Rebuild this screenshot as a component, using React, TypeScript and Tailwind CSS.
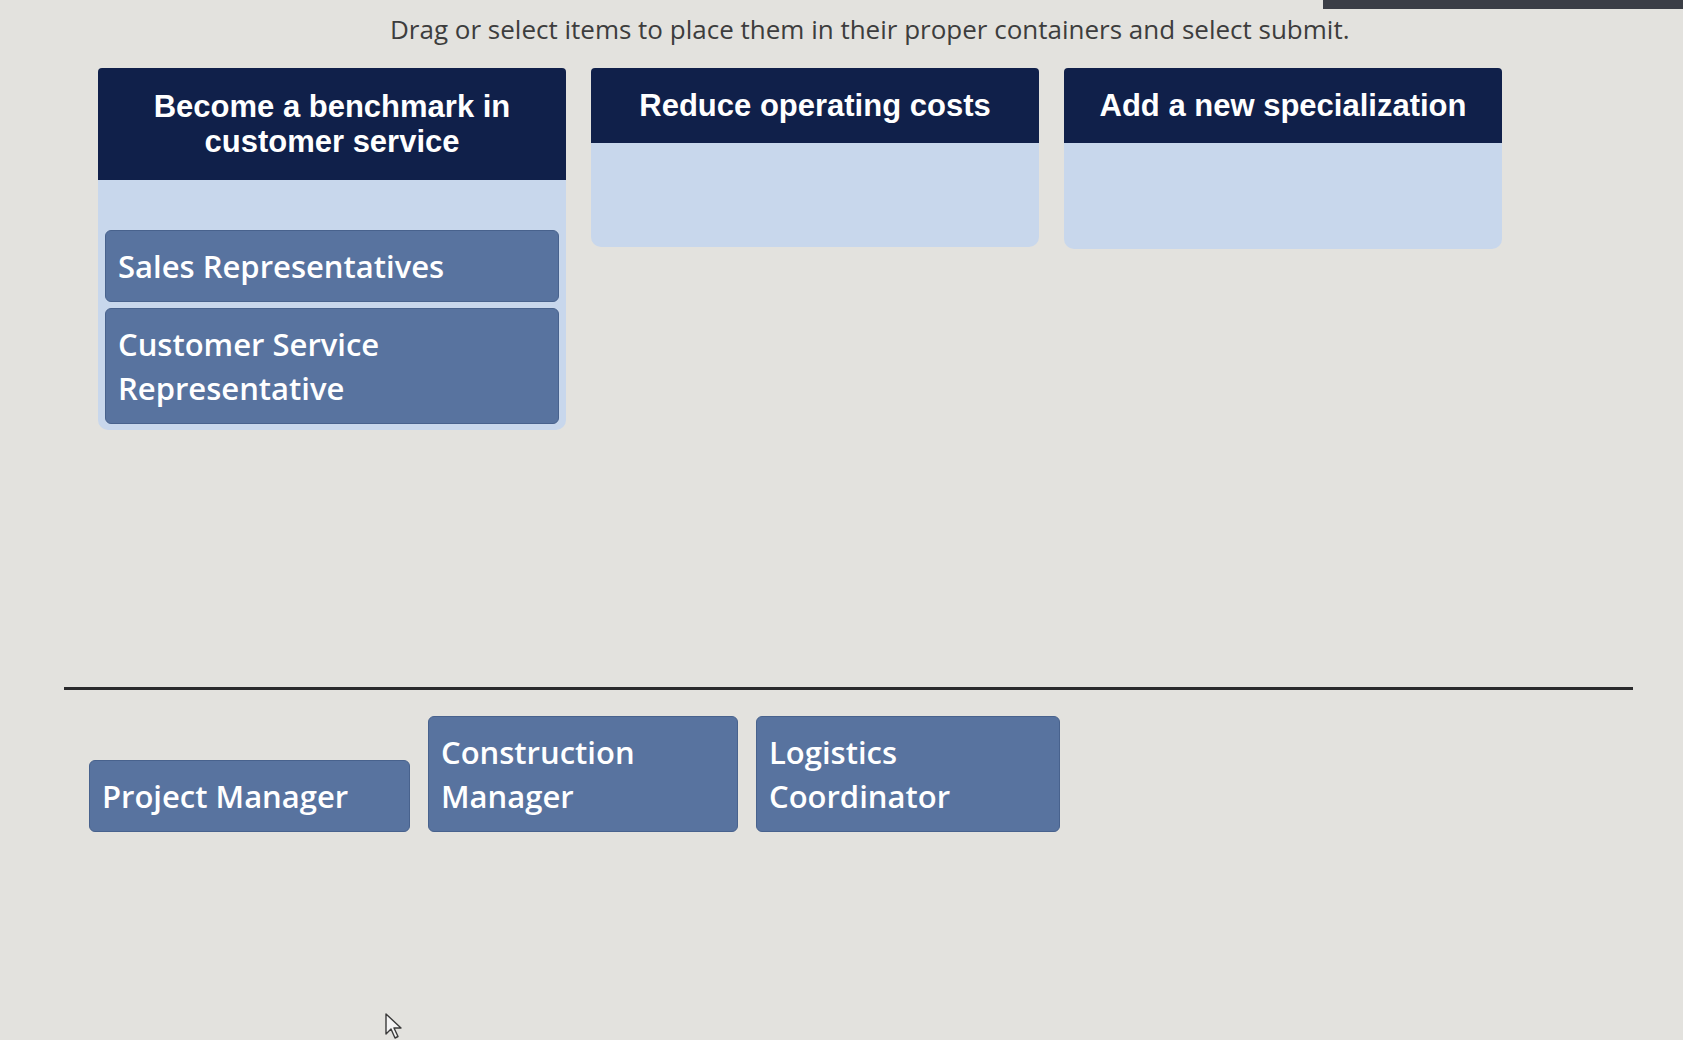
import React from "react";

type Goal = {
  title: string[];
  width: string;
  bodyClass: string;
  items: string[][];
};

const goals: Goal[] = [
  {
    title: ["Become a benchmark in", "customer service"],
    width: "w-[468px]",
    bodyClass: "pt-[50px] pb-[6px] px-[7px] flex flex-col gap-[6px]",
    items: [["Sales Representatives"], ["Customer Service", "Representative"]],
  },
  {
    title: ["Reduce operating costs"],
    width: "w-[448px]",
    bodyClass: "h-[104px]",
    items: [],
  },
  {
    title: ["Add a new specialization"],
    width: "w-[438px]",
    bodyClass: "h-[106px]",
    items: [],
  },
];

const bank = [
  { lines: ["Project Manager"], width: "w-[321px]" },
  { lines: ["Construction", "Manager"], width: "w-[310px]" },
  { lines: ["Logistics", "Coordinator"], width: "w-[304px]" },
];

function Tile({ lines, className = "" }: { lines: string[]; className?: string }) {
  return (
    <div
      className={`rounded-[6px] bg-[#58739f] border border-[#48628d] text-white font-semibold text-[31px] leading-[44px] px-[12px] py-[13px] ${className}`}
      style={{ fontFamily: '"Open Sans", "Noto Sans", sans-serif' }}
    >
      {lines.map((l) => (
        <div key={l}>{l}</div>
      ))}
    </div>
  );
}

function Cursor() {
  return (
    <svg width="22" height="28" viewBox="0 0 22 28" className="absolute left-[384px] top-[1012px]">
      <path
        d="M2 2 L2 22 L7 17 L11 26 L14 24.5 L10 16 L17 16 Z"
        fill="#f4f4f4"
        stroke="#3a3a3a"
        strokeWidth="1.4"
        strokeLinejoin="round"
      />
    </svg>
  );
}

export default function App() {
  return (
    <div
      className="relative w-[1683px] h-[1040px] overflow-hidden bg-[#e3e2de]"
      style={{ fontFamily: '"Open Sans", "Noto Sans", sans-serif' }}
    >
      {/* monitor bezel peeking in at the top right */}
      <div className="absolute top-0 right-0 w-[360px] h-[9px] bg-[#3b3e46]" />

      <div className="pt-[13px] pl-[390px] text-[26px] leading-[32px] text-[#3d3d3d]">
        Drag or select items to place them in their proper containers and select submit.
      </div>

      {/* drop containers */}
      <div className="mt-[23px] pl-[98px] flex items-start gap-[25px]">
        {goals.map((g) => (
          <div key={g.title.join(" ")} className={`${g.width} flex flex-col`}>
            <div
              className={`bg-[#10204a] rounded-t-[4px] text-white font-bold text-center text-[31px] leading-[35px] ${
                g.title.length > 1 ? "py-[21px]" : "py-[20px]"
              }`}
              style={{ fontFamily: '"Liberation Sans", Arial, sans-serif' }}
            >
              {g.title.map((t) => (
                <div key={t}>{t}</div>
              ))}
            </div>
            <div className={`bg-[#c8d7ec] rounded-b-[10px] ${g.bodyClass}`}>
              {g.items.map((it) => (
                <Tile key={it.join(" ")} lines={it} />
              ))}
            </div>
          </div>
        ))}
      </div>

      <div className="mt-[257px] ml-[64px] w-[1569px] h-[3px] bg-[#2a2a2c]" />

      {/* item bank */}
      <div className="mt-[26px] pl-[89px] flex items-end gap-[18px]">
        {bank.map((b) => (
          <Tile key={b.lines.join(" ")} lines={b.lines} className={b.width} />
        ))}
      </div>

      <Cursor />
    </div>
  );
}
